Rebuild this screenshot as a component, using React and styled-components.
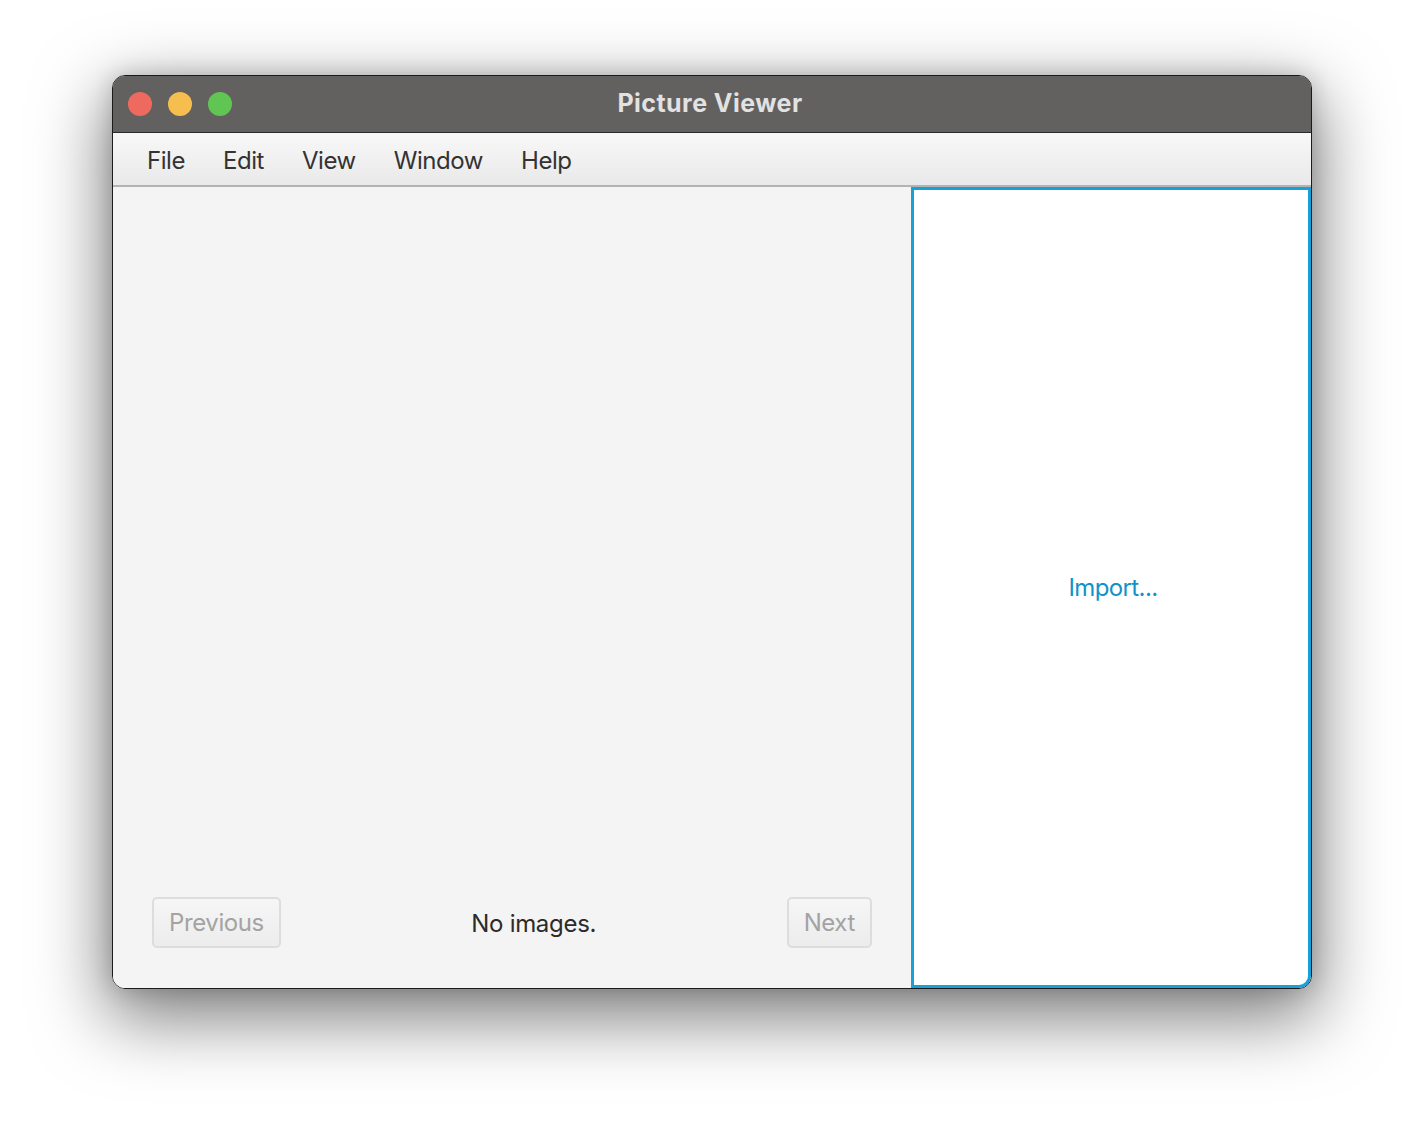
import styled, { createGlobalStyle } from "styled-components";

//picture viewer window: titlebar, menu, viewer area and an import panel on the right

const GlobalStyle = createGlobalStyle`
    html, body {
        margin: 0;
        padding: 0;
        background: #ffffff;
    }
    body {
        font-family: Inter, "Noto Sans", "Liberation Sans", sans-serif;
    }
`

const App = () => {
    return (
        <>
            <GlobalStyle />
            <Page>
                <Window>
                    <TitleBar>
                        <Lights>
                            <Light color="#ee6a5e" />
                            <Light color="#f5be4f" />
                            <Light color="#61c554" />
                        </Lights>
                        <Title>Picture Viewer</Title>
                    </TitleBar>
                    <MenuBar>
                        <MenuItem>File</MenuItem>
                        <MenuItem>Edit</MenuItem>
                        <MenuItem>View</MenuItem>
                        <MenuItem>Window</MenuItem>
                        <MenuItem>Help</MenuItem>
                    </MenuBar>
                    <Body>
                        <Viewer>
                            <Controls>
                                <NavButton disabled>Previous</NavButton>
                                <Status>No images.</Status>
                                <NavButton disabled>Next</NavButton>
                            </Controls>
                        </Viewer>
                        <ImportPanel>
                            <ImportLink>Import...</ImportLink>
                        </ImportPanel>
                    </Body>
                </Window>
            </Page>
        </>
    );
}

const Page = styled.div`
    width: 1424px;
    height: 1136px;
    box-sizing: border-box;
    padding: 75px 112px 0 112px;
`

const Window = styled.div`
    width: 1200px;
    height: 914px;
    box-sizing: border-box;
    display: flex;
    flex-direction: column;
    border: 1px solid #1b1b1b;
    border-radius: 13px;
    overflow: hidden;
    box-shadow: 0 24px 70px 6px rgba(0, 0, 0, 0.5), 0 0 22px rgba(0, 0, 0, 0.18);
`

const TitleBar = styled.div`
    position: relative;
    height: 56px;
    flex-shrink: 0;
    background: #636160;
    border-bottom: 1px solid #2a2a2a;
    display: flex;
    align-items: center;
    justify-content: center;
`

const Lights = styled.div`
    position: absolute;
    left: 15px;
    top: 16px;
    display: flex;
    gap: 16px;
`

const Light = styled.span`
    width: 24px;
    height: 24px;
    border-radius: 50%;
    background: ${props => props.color};
`

const Title = styled.div`
    color: #e2e2e2;
    font-weight: 700;
    font-size: 25px;
    letter-spacing: 0.45px;
    margin: 0 4px 2px 0;
`

const MenuBar = styled.div`
    height: 52px;
    flex-shrink: 0;
    display: flex;
    align-items: center;
    padding-left: 34px;
    background: linear-gradient(#f8f8f8, #e9e9e9);
    border-bottom: 2px solid #b3b3b3;
`

const MenuItem = styled.div`
    color: #333333;
    font-size: 24px;
    letter-spacing: -0.45px;
    padding-top: 3px;
    margin-right: 38px;
`

const Body = styled.div`
    flex: 1;
    display: flex;
    min-height: 0;
`

const Viewer = styled.div`
    flex: 1;
    background: #f4f4f4;
    display: flex;
    flex-direction: column;
    justify-content: flex-end;
    padding: 0 39px 40px 39px;
`

const Controls = styled.div`
    display: flex;
    align-items: center;
    justify-content: space-between;
`

const NavButton = styled.button`
    height: 51px;
    padding: 0 15px;
    font-family: inherit;
    font-size: 24px;
    letter-spacing: -0.4px;
    color: #a3a3a3;
    background: linear-gradient(#f6f6f6, #ececec);
    border: 2px solid #dddddd;
    border-radius: 5px;
`

const Status = styled.div`
    font-size: 24px;
    color: #2b2b2b;
    letter-spacing: -0.3px;
    margin-top: 1px;
`

const ImportPanel = styled.div`
    width: 400px;
    box-sizing: border-box;
    background: #ffffff;
    border: 3px solid #1aa0d8;
    border-bottom-right-radius: 12px;
    display: flex;
    align-items: center;
    justify-content: center;
`

const ImportLink = styled.div`
    color: #1192ca;
    font-size: 24px;
    letter-spacing: -0.6px;
    margin-left: 4px;
`

export default App;
